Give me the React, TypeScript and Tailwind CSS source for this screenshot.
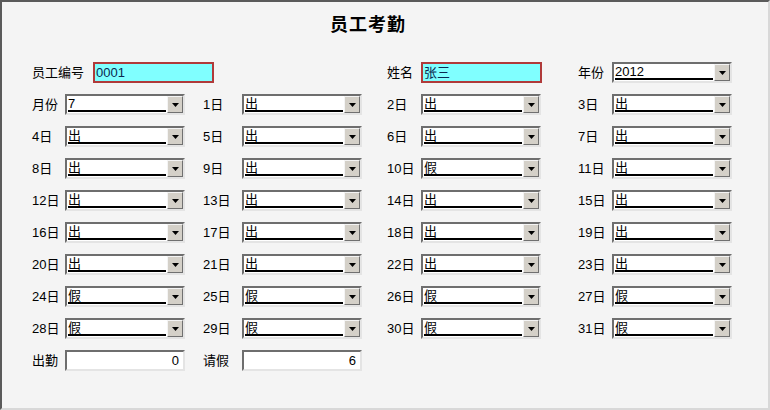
import React from "react";

const font = { fontFamily: '"Liberation Sans","Noto Sans CJK SC",sans-serif' };

function Combo({ value }: { value: string }) {
  return (
    <div className="flex h-[21px] w-[120px] border-2 border-t-[#6e6e6e] border-l-[#6e6e6e] border-b-[#e4e4e4] border-r-[#e4e4e4] bg-white">
      <div className="relative flex-1 pl-[1px] text-[13px] leading-[16px] text-black">
        {value}
        <div className="absolute bottom-[1px] left-[1px] right-[1px] h-[2px] bg-black" />
      </div>
      <div className="flex w-[16px] items-center justify-center border border-t-[#f4f4f4] border-l-[#f4f4f4] border-b-[#707070] border-r-[#707070] bg-[#d4d0c8]">
        <svg width="7" height="4" viewBox="0 0 7 4">
          <path d="M0 0H7L3.5 4Z" fill="#000" />
        </svg>
      </div>
    </div>
  );
}

function TextBox({ value, hl }: { value: string; hl?: boolean }) {
  if (hl)
    return (
      <div className="h-[21px] w-[121px] border-2 border-[#b03a3a] bg-[#80ffff] pl-[1px] text-[13px] leading-[17px] text-[#0c2850]">
        {value}
      </div>
    );
  return (
    <div className="h-[21px] w-[120px] border-2 border-t-[#6e6e6e] border-l-[#6e6e6e] border-b-[#e4e4e4] border-r-[#e4e4e4] bg-white pr-[4px] text-right text-[13px] leading-[17px] text-black">
      {value}
    </div>
  );
}

function Cell({ label, lw, children }: { label?: string; lw: number; children?: React.ReactNode }) {
  if (!label) return <div />;
  return (
    <div className="flex items-center">
      <div style={{ width: lw }} className="text-[13px] text-black">
        {label}
      </div>
      {children}
    </div>
  );
}

const days: string[] = [
  "出", "出", "出", "出", "出", "出", "出", "出", "出", "假", "出", "出",
  "出", "出", "出", "出", "出", "出", "出", "出", "出", "出", "出", "假",
  "假", "假", "假", "假", "假", "假", "假",
];

export default function App() {
  const rows: { label: string; value: string }[][] = [];
  const cells = [{ label: "月份", value: "7" }, ...days.map((d, i) => ({ label: `${i + 1}日`, value: d }))];
  for (let i = 0; i < cells.length; i += 4) rows.push(cells.slice(i, i + 4));
  const lws = [33, 39, 34, 34];

  return (
    <div style={font} className="h-[410px] w-[770px] bg-[#f4f4f4]">
      <div className="h-full w-full border-t-2 border-l-2 border-t-[#5a5a5a] border-l-[#5a5a5a] border-r-2 border-b-2 border-r-[#d8d8d8] border-b-[#d8d8d8]">
        <div className="pt-[11px] pl-[328px] text-[18px] font-bold leading-[24px] tracking-[1px] text-black">员工考勤</div>
        <div className="grid grid-cols-[171px_184px_191px_1fr] gap-y-[11px] pl-[30px] pt-[25px]">
          <div className="col-span-2 flex items-center">
            <div className="w-[61px] text-[13px]">员工编号</div>
            <TextBox value="0001" hl />
          </div>
          <Cell label="姓名" lw={34}>
            <TextBox value="张三" hl />
          </Cell>
          <Cell label="年份" lw={34}>
            <Combo value="2012" />
          </Cell>
          {rows.map((r, ri) =>
            [0, 1, 2, 3].map((ci) => {
              const c = r[ci];
              return c ? (
                <Cell key={`${ri}-${ci}`} label={c.label} lw={lws[ci]}>
                  <Combo value={c.value} />
                </Cell>
              ) : (
                <div key={`${ri}-${ci}`} />
              );
            })
          )}
          <Cell label="出勤" lw={33}>
            <TextBox value="0" />
          </Cell>
          <Cell label="请假" lw={39}>
            <TextBox value="6" />
          </Cell>
        </div>
      </div>
    </div>
  );
}
